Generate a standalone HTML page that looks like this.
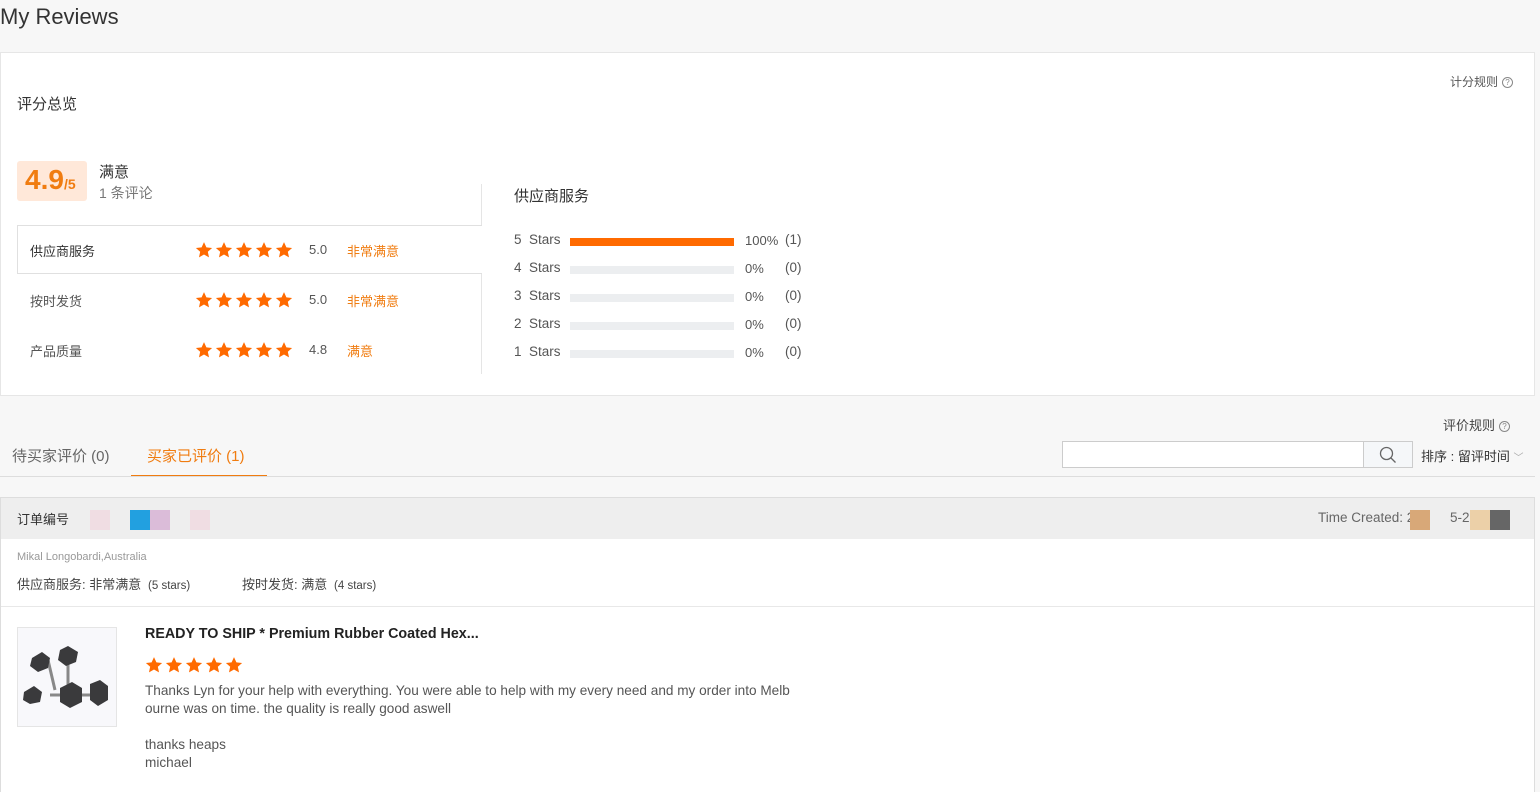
<!DOCTYPE html>
<html><head><meta charset="utf-8"><style>
*{margin:0;padding:0;box-sizing:border-box}
body{width:1540px;height:792px;overflow:hidden;background:#f7f7f7;font-family:"Liberation Sans","Noto Sans CJK SC",sans-serif;color:#333;position:relative}
.a{position:absolute;white-space:nowrap}
.st{position:absolute;display:flex;gap:2px}
.st svg{width:18px;height:18px}
.or{color:#f07c10}
.bar{position:absolute;left:570px;width:164px;height:8px;background:#eceef0}
.q{display:inline-block;width:11px;height:11px;border:1px solid #888;border-radius:50%;font-size:8px;line-height:9px;text-align:center;color:#888;vertical-align:1px;margin-left:4px}
</style></head><body>
<svg width="0" height="0" style="position:absolute"><defs><symbol id="s" viewBox="0 0 24 24"><path d="M12 1.5l3.2 7 7.6.8-5.7 5.1 1.6 7.5L12 18l-6.7 3.9 1.6-7.5L1.2 9.3l7.6-.8z" fill="#ff6a00"/></symbol></defs></svg>
<div class="a" style="left:0;top:4px;font-size:22px;color:#333">My Reviews</div>
<div class="a" style="left:0;top:52px;width:1535px;height:344px;background:#fff;border:1px solid #e6e6e6"></div>
<div class="a" style="left:1450px;top:73px;font-size:12px;color:#555">计分规则<span class="q">?</span></div>
<div class="a" style="left:17px;top:93px;font-size:15px;color:#333">评分总览</div>
<div class="a" style="left:17px;top:161px;width:70px;height:40px;background:#ffe8d9;border-radius:3px"></div>
<div class="a" style="left:25px;top:164px;font-size:28px;color:#f07c10;font-weight:bold">4.9<span style="font-size:14px">/5</span></div>
<div class="a" style="left:99px;top:161px;font-size:15px;color:#333">满意</div>
<div class="a" style="left:99px;top:183px;font-size:14px;color:#777">1 条评论</div>
<div class="a" style="left:481px;top:184px;width:1px;height:41px;background:#e5e5e5"></div>
<div class="a" style="left:17px;top:225px;width:465px;height:49px;border:1px solid #e0e0e0;border-right:none"></div>
<div class="a" style="left:481px;top:274px;width:1px;height:100px;background:#e5e5e5"></div>
<div class="a" style="left:30px;top:241px;font-size:13px">供应商服务</div>
<div class="a" style="left:30px;top:291px;font-size:13px;color:#555">按时发货</div>
<div class="a" style="left:30px;top:341px;font-size:13px;color:#555">产品质量</div>
<div class="st" style="left:195px;top:241px"><svg><use href="#s"/></svg><svg><use href="#s"/></svg><svg><use href="#s"/></svg><svg><use href="#s"/></svg><svg><use href="#s"/></svg></div>
<div class="st" style="left:195px;top:291px"><svg><use href="#s"/></svg><svg><use href="#s"/></svg><svg><use href="#s"/></svg><svg><use href="#s"/></svg><svg><use href="#s"/></svg></div>
<div class="st" style="left:195px;top:341px"><svg><use href="#s"/></svg><svg><use href="#s"/></svg><svg><use href="#s"/></svg><svg><use href="#s"/></svg><svg><use href="#s"/></svg></div>
<div class="a" style="left:309px;top:242px;font-size:13px;color:#555">5.0</div>
<div class="a" style="left:309px;top:292px;font-size:13px;color:#555">5.0</div>
<div class="a" style="left:309px;top:342px;font-size:13px;color:#555">4.8</div>
<div class="a or" style="left:347px;top:241px;font-size:13px">非常满意</div>
<div class="a or" style="left:347px;top:291px;font-size:13px">非常满意</div>
<div class="a or" style="left:347px;top:341px;font-size:13px">满意</div>
<div class="a" style="left:514px;top:185px;font-size:15px">供应商服务</div>
<div class="a" style="left:514px;top:232px;font-size:13.5px;color:#555">5&nbsp; Stars</div>
<div class="a" style="left:514px;top:260px;font-size:13.5px;color:#555">4&nbsp; Stars</div>
<div class="a" style="left:514px;top:288px;font-size:13.5px;color:#555">3&nbsp; Stars</div>
<div class="a" style="left:514px;top:316px;font-size:13.5px;color:#555">2&nbsp; Stars</div>
<div class="a" style="left:514px;top:344px;font-size:13.5px;color:#555">1&nbsp; Stars</div>
<div class="bar" style="top:238px;background:#ff6a00"></div>
<div class="bar" style="top:266px"></div><div class="bar" style="top:294px"></div><div class="bar" style="top:322px"></div><div class="bar" style="top:350px"></div>
<div class="a" style="left:745px;top:233px;font-size:13px;color:#555">100%</div>
<div class="a" style="left:745px;top:261px;font-size:13px;color:#555">0%</div>
<div class="a" style="left:745px;top:289px;font-size:13px;color:#555">0%</div>
<div class="a" style="left:745px;top:317px;font-size:13px;color:#555">0%</div>
<div class="a" style="left:745px;top:345px;font-size:13px;color:#555">0%</div>
<div class="a" style="left:785px;top:232px;font-size:13.5px;color:#555">(1)</div>
<div class="a" style="left:785px;top:260px;font-size:13.5px;color:#555">(0)</div>
<div class="a" style="left:785px;top:288px;font-size:13.5px;color:#555">(0)</div>
<div class="a" style="left:785px;top:316px;font-size:13.5px;color:#555">(0)</div>
<div class="a" style="left:785px;top:344px;font-size:13.5px;color:#555">(0)</div>
<div class="a" style="left:1443px;top:415px;font-size:13px;color:#444">评价规则<span class="q">?</span></div>
<div class="a" style="left:12px;top:445px;font-size:15px;color:#666">待买家评价 (0)</div>
<div class="a" style="left:147px;top:445px;font-size:15px;color:#f07c10">买家已评价 (1)</div>
<div class="a" style="left:131px;top:475px;width:136px;height:2px;background:#f07c10"></div>
<div class="a" style="left:0;top:476px;width:1535px;height:1px;background:#ddd"></div>
<div class="a" style="left:1062px;top:441px;width:302px;height:27px;background:#fff;border:1px solid #ccc"></div>
<div class="a" style="left:1363px;top:441px;width:50px;height:27px;background:#f5f7f9;border:1px solid #ccc"></div>
<svg class="a" style="left:1379px;top:446px" width="18" height="18" viewBox="0 0 18 18"><circle cx="7.5" cy="7.5" r="6" fill="none" stroke="#666" stroke-width="1.3"/><path d="M12 12l4.5 4.5" stroke="#666" stroke-width="1.3"/></svg>
<div class="a" style="left:1421px;top:446px;font-size:13px">排序 : 留评时间 <span style="color:#aaa;font-size:10px">﹀</span></div>
<div class="a" style="left:0;top:497px;width:1535px;height:295px;background:#fff;border:1px solid #ddd;border-bottom:none"></div>
<div class="a" style="left:1px;top:498px;width:1533px;height:41px;background:#eee"></div>
<div class="a" style="left:17px;top:509px;font-size:13px">订单编号</div>
<div class="a" style="left:90px;top:510px;width:20px;height:20px;background:#f0dde3"></div>
<div class="a" style="left:130px;top:510px;width:20px;height:20px;background:#22a0e0"></div>
<div class="a" style="left:150px;top:510px;width:20px;height:20px;background:#dbbcd9"></div>
<div class="a" style="left:190px;top:510px;width:20px;height:20px;background:#f0dde3"></div>
<div class="a" style="left:1318px;top:510px;font-size:13.5px;color:#666">Time Created: 2</div>
<div class="a" style="left:1410px;top:510px;width:20px;height:20px;background:#d8a878"></div>
<div class="a" style="left:1450px;top:510px;font-size:13.5px;color:#666">5-2</div>
<div class="a" style="left:1470px;top:510px;width:20px;height:20px;background:#ecd0a8"></div>
<div class="a" style="left:1490px;top:510px;width:20px;height:20px;background:#666"></div>
<div class="a" style="left:17px;top:551px;font-size:11px;color:#999">Mikal Longobardi,Australia</div>
<div class="a" style="left:17px;top:574px;font-size:13px;color:#444">供应商服务: 非常满意 <span style="font-size:11.5px">&nbsp;(5 stars)</span></div>
<div class="a" style="left:242px;top:574px;font-size:13px;color:#444">按时发货: 满意 <span style="font-size:11.5px">&nbsp;(4 stars)</span></div>
<div class="a" style="left:1px;top:606px;width:1533px;height:1px;background:#e8e8e8"></div>
<div class="a" style="left:17px;top:627px;width:100px;height:100px;border:1px solid #e5e5e5;background:#f8f8fb"></div>
<svg class="a" style="left:20px;top:640px" width="95" height="80" viewBox="0 0 95 80"><g fill="#3a3a3c"><path d="M28 20 L35 50" stroke="#888" stroke-width="3"/><path d="M48 18 L48 50" stroke="#888" stroke-width="3"/><path d="M30 55 L82 55" stroke="#888" stroke-width="3"/><polygon points="12,18 22,12 30,18 28,28 18,32 10,26"/><polygon points="40,10 48,6 58,12 56,22 46,26 38,20"/><polygon points="4,52 14,46 22,52 20,62 10,64 3,60"/><polygon points="40,48 52,42 62,48 62,62 50,68 40,62"/><polygon points="70,44 80,40 88,46 88,60 78,66 70,60"/></g></svg>
<div class="a" style="left:145px;top:626px;font-size:14.3px;font-weight:bold;color:#222">READY TO SHIP * Premium Rubber Coated Hex...</div>
<div class="st" style="left:145px;top:656px"><svg><use href="#s"/></svg><svg><use href="#s"/></svg><svg><use href="#s"/></svg><svg><use href="#s"/></svg><svg><use href="#s"/></svg></div>
<div class="a" style="left:145px;top:682px;font-size:13.6px;color:#555;line-height:18px">Thanks Lyn for your help with everything. You were able to help with my every need and my order into Melb<br>ourne was on time. the quality is really good aswell<br><br>thanks heaps<br>michael</div>
</body></html>
